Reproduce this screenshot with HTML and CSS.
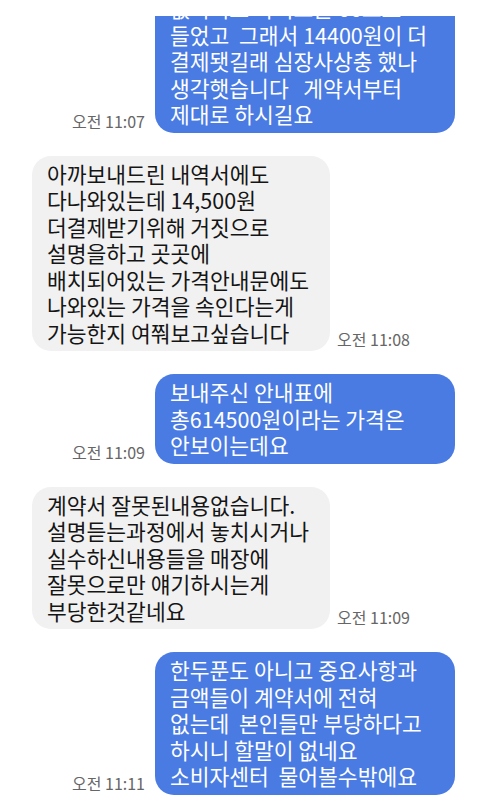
FILE: index.html
```html
<!DOCTYPE html>
<html>
  <head>
    <meta charset="utf-8" />
    <title>메시지</title>
    <link rel="stylesheet" href="styles.css">
  </head>

  <body>
    <div class="chat">
      <div class="row out first">
        <span class="time">오전 11:07</span>
        <div class="bubble">없어서요 사이즈는 66으로<br>들었고  그래서 14400원이 더<br>결제됏길래 심장사상충 했나<br>생각햇습니다   게약서부터<br>제대로 하시길요</div>
      </div>

      <div class="row in">
        <div class="bubble">아까보내드린 내역서에도<br>다나와있는데 14,500원<br>더결제받기위해 거짓으로<br>설명을하고 곳곳에<br>배치되어있는 가격안내문에도<br>나와있는 가격을 속인다는게<br>가능한지 여쭤보고싶습니다</div>
        <span class="time">오전 11:08</span>
      </div>

      <div class="row out">
        <span class="time">오전 11:09</span>
        <div class="bubble">보내주신 안내표에<br>총614500원이라는 가격은<br>안보이는데요</div>
      </div>

      <div class="row in">
        <div class="bubble">계약서 잘못된내용없습니다.<br>설명듣는과정에서 놓치시거나<br>실수하신내용들을 매장에<br>잘못으로만 얘기하시는게<br>부당한것같네요</div>
        <span class="time">오전 11:09</span>
      </div>

      <div class="row out">
        <span class="time">오전 11:11</span>
        <div class="bubble">한두푼도 아니고 중요사항과<br>금액들이 계약서에 전혀<br>없는데  본인들만 부당하다고<br>하시니 할말이 없네요<br>소비자센터  물어볼수밖에요</div>
      </div>
    </div>
  </body>
</html>
```

FILE: styles.css
```css
body {
  margin: 0;
  background-color: #ffffff;
  font-family: 'Noto Sans CJK KR', 'Noto Sans', sans-serif;
}

.chat {
  height: 795px;
  margin-top: 16px;
  overflow: hidden;
  display: flex;
  flex-direction: column;
  gap: 23px;
}

.row {
  display: flex;
  align-items: flex-end;
}

.row.out {
  justify-content: flex-end;
  padding-right: 25px;
  gap: 10px;
}

.row.in {
  padding-left: 32px;
  gap: 7px;
}

.row.first {
  margin-top: -26px;
}

.bubble {
  box-sizing: border-box;
  padding: 5px 15px;
  border-radius: 19px;
  font-size: 21.5px;
  line-height: 26.5px;
  white-space: pre-wrap;
}

.row.out .bubble {
  width: 300px;
  background-color: #4a7be3;
  color: #ffffff;
}

.row.in .bubble {
  width: 298px;
  background-color: #f1f1f1;
  color: #151515;
}

.time {
  padding-bottom: 4px;
  font-size: 16px;
  line-height: 1;
  color: #666666;
  white-space: nowrap;
}
```
